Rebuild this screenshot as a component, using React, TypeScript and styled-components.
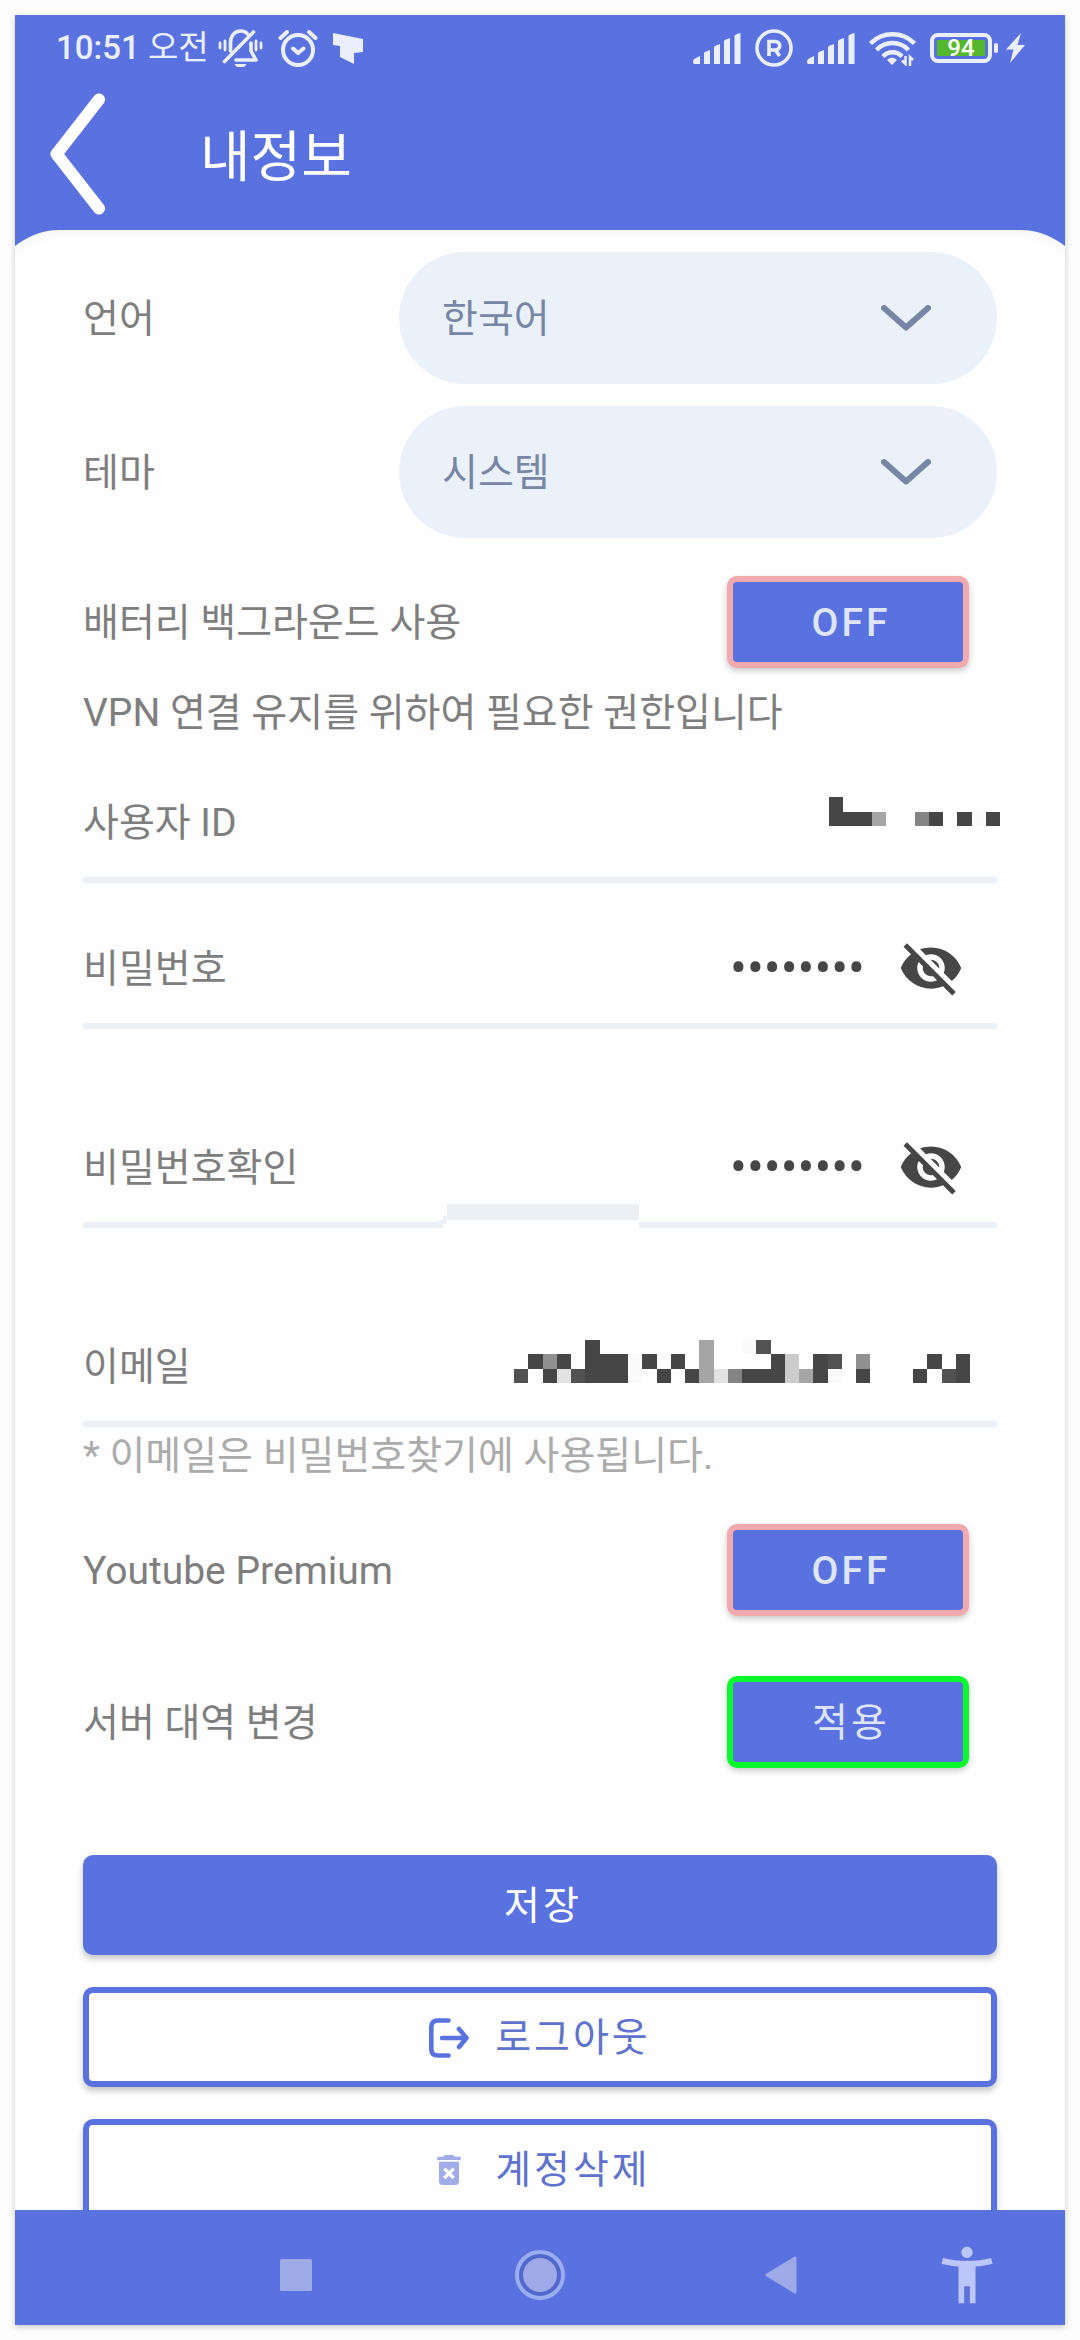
import React from 'react';
import styled, { createGlobalStyle } from 'styled-components';
import { MdVisibilityOff, MdDeleteForever, MdAccessibilityNew } from 'react-icons/md';

const blue = '#5a72e0';
const fontStack = `Roboto, 'Noto Sans CJK KR', sans-serif`;

const GlobalStyle = createGlobalStyle`
  *, *::before, *::after { box-sizing: border-box; }
  body { margin: 0; background: #fdfdfd; font-family: ${fontStack}; }
  button, input, select { font-family: inherit; }
`;

const Page = styled.div`
  height: 100vh;
  padding: 15px;
`;

const Phone = styled.div`
  display: flex;
  flex-direction: column;
  height: 100%;
  overflow: hidden;
  background: ${blue};
  box-shadow: 0 2px 6px rgba(0, 0, 0, 0.22);
`;

const StatusBar = styled.div`
  display: flex;
  flex: none;
  align-items: center;
  justify-content: space-between;
  height: 66px;
  padding: 0 40px 0 41px;
  color: #ebeffd;
`;

const StatusGroup = styled.div<{ $gap: number }>`
  display: flex;
  align-items: center;
  gap: ${(p) => p.$gap}px;
`;

const Clock = styled.span`
  margin-right: -6px;
  font-size: 33px;
  line-height: 40px;
  b { font-weight: 500; }
`;

const BatteryBody = styled.span`
  display: flex;
  width: 62px;
  height: 30px;
  padding: 3px;
  border: 4px solid #ebeffd;
  border-radius: 8px;
`;

const BatteryLevel = styled.span`
  display: flex;
  flex: 1;
  align-items: center;
  justify-content: center;
  background: #55b82c;
  color: #fff;
  font-size: 24px;
  font-weight: 500;
  line-height: 16px;
`;

const Battery = styled.span`
  display: flex;
  align-items: center;
  gap: 2px;
  &::after {
    content: '';
    width: 4px;
    height: 10px;
    border-radius: 2px;
    background: #ebeffd;
  }
`;

const AppBar = styled.header`
  position: relative;
  display: flex;
  flex: none;
  align-items: center;
  gap: 94px;
  height: 149px;
  padding: 0 35px 4px;
`;

const BackButton = styled.button`
  display: flex;
  padding: 0;
  border: 0;
  background: none;
  color: #fff;
  cursor: pointer;
`;

const Title = styled.h1`
  margin: 0;
  padding-top: 6px;
  color: #fff;
  font-size: 55px;
  font-weight: 400;
  line-height: 64px;
`;

const Sheet = styled.main`
  flex: 1;
  min-height: 0;
  margin: 0 -26px;
  padding: 22px 94px 0;
  overflow-y: auto;
  scrollbar-width: none;
  border-radius: 71px 71px 0 0;
  background: #fefefe;
  box-shadow: inset 0 4px 8px rgba(80, 60, 60, 0.05);
`;

const Row = styled.div<{ $top?: number }>`
  display: flex;
  align-items: center;
  justify-content: space-between;
  margin-top: ${(p) => p.$top ?? 0}px;
  padding-right: 28px;
`;

const SelectRow = styled.div`
  display: grid;
  grid-template-columns: 316px 1fr;
  align-items: center;
  margin-bottom: 22px;
`;

const Label = styled.label`
  flex: none;
  padding-top: 2px;
  color: #7e7e7e;
  font-size: 39px;
  line-height: 50px;
`;

const Hint = styled.p<{ $top: number; $light?: boolean }>`
  margin: ${(p) => p.$top}px 0 -1px;
  color: ${(p) => (p.$light ? '#ababab' : '#7e7e7e')};
  font-size: 39px;
  line-height: 50px;
`;

const SelectWrap = styled.div`
  position: relative;
  svg {
    position: absolute;
    top: 53px;
    right: 66px;
    pointer-events: none;
  }
`;

const Select = styled.select`
  width: 100%;
  height: 132px;
  padding: 2px 120px 0 43px;
  appearance: none;
  border: 0;
  border-radius: 66px;
  background: #eaf1f9;
  color: #7886a6;
  font-size: 39px;
`;

const ToggleButton = styled.button<{ $ring: string }>`
  width: 242px;
  height: 92px;
  padding: 2px 0 0 6px;
  border: 6px solid ${(p) => p.$ring};
  border-radius: 10px;
  background: ${blue};
  box-shadow: 0 3px 6px rgba(0, 0, 0, 0.2);
  color: #dfe5f8;
  font-size: 39px;
  letter-spacing: 3px;
  line-height: 50px;
  cursor: pointer;
  b { font-weight: 500; }
`;

const Field = styled.div<{ $top?: number }>`
  position: relative;
  display: flex;
  align-items: center;
  height: 146px;
  margin-top: ${(p) => p.$top ?? 0}px;
  padding-top: 30px;
  border-bottom: 6px solid #ecf1f7;
`;

const FieldInput = styled.input`
  flex: 1;
  min-width: 0;
  height: 60px;
  padding: 0;
  border: 0;
  outline: 0;
  background: none;
  color: #464646;
  font-size: 50px;
  text-align: right;
`;

const EyeButton = styled.button`
  display: flex;
  margin: 0 33px 0 33px;
  padding: 0;
  border: 0;
  background: none;
  color: #464646;
  cursor: pointer;
`;

const Censor = styled.svg<{ $right: number; $top: number }>`
  position: absolute;
  top: ${(p) => p.$top}px;
  right: ${(p) => p.$right}px;
`;

const Smudge = styled.svg`
  position: absolute;
  bottom: -6px;
  left: 39%;
`;

const Actions = styled.div`
  display: flex;
  flex-direction: column;
  gap: 32px;
  margin-top: 87px;
  padding-bottom: 32px;
`;

const ActionButton = styled.button<{ $filled?: boolean }>`
  display: flex;
  align-items: center;
  justify-content: center;
  gap: 26px;
  height: 100px;
  padding: ${(p) => (p.$filled ? '2px 0 0 6px' : '2px 0 0')};
  border: 6px solid ${blue};
  border-radius: 10px;
  background: ${(p) => (p.$filled ? blue : '#fefefe')};
  box-shadow: 0 4px 6px rgba(0, 0, 0, 0.22);
  color: ${(p) => (p.$filled ? '#fff' : '#5f72cc')};
  font-size: 39px;
  letter-spacing: 3px;
  line-height: 50px;
  cursor: pointer;
`;

const IconSlot = styled.span`
  display: flex;
  justify-content: center;
  width: 40px;
  color: #a0abe8;
`;

const NavBar = styled.nav`
  position: relative;
  display: grid;
  flex: none;
  grid-template-columns: 122fr 122fr 119fr 67fr;
  height: 115px;
  padding: 15px 31px 0 159px;
  background: ${blue};
`;

const NavButton = styled.button`
  display: flex;
  align-items: center;
  justify-content: center;
  padding: 0;
  border: 0;
  background: none;
  color: #bcc6fa;
  cursor: pointer;
`;

const BellOff = () => (
  <svg width="45" height="38" viewBox="0 0 45 38" fill="none" stroke="currentColor" strokeWidth="3.6" strokeLinecap="round" strokeLinejoin="round">
    <path d="M12.5 22V14c0-7 4-12 10-12 3 0 5.500 1 7 3M33 14v8l5 9H18" />
    <path d="M6.500 32.500 35.500 3" />
    <path d="M2 14v5M7 12v9M38 12v9M43 14v5" strokeWidth="2.800" />
    <path d="M16.500 35h12c-1.500 3-3.500 3.500-6 3.500s-4.500-.5-6-3.500z" fill="currentColor" stroke="none" />
  </svg>
);

const Alarm = () => (
  <svg width="40" height="38" viewBox="0 0 40 38" fill="none" stroke="currentColor" strokeWidth="4" strokeLinecap="round" strokeLinejoin="round">
    <circle cx="20" cy="21" r="15" />
    <path d="M2.500 9 9 3M37.500 9 31 3M15 19.500l5 4.500 5.500-4.500" />
  </svg>
);

const FlagMark = () => (
  <svg width="30" height="31" viewBox="0 0 30 31" fill="currentColor">
    <path d="M0 0 30 6V19L21 20V31L7 24V13L0 12Z" />
  </svg>
);

const Signal = () => (
  <svg width="48" height="31" viewBox="0 0 48 31" fill="currentColor">
    <path d="M0 28q0-2 7-5v8H1.500Q0 31 0 28zM11 20q0-1 6-3v14h-6zM21 14q0-1 6-3v20h-6zM31 8q0-1 6-3v26h-6zM41.500 3q0-1.500 6-3v31h-6z" />
  </svg>
);

const Registered = () => (
  <svg width="38" height="38" viewBox="0 0 38 38" fill="none" stroke="currentColor" strokeWidth="3.600">
    <circle cx="19" cy="19" r="17" />
    <path d="M14 27V12.500h6.500a4 4 0 0 1 0 8.500H14M20.500 21l4 6" />
  </svg>
);

const Wifi = () => (
  <svg width="47" height="35" viewBox="0 0 47 35" fill="none" stroke="currentColor" strokeWidth="4.500">
    <path d="M1.500 12.500a31 31 0 0 1 44 0M7.500 19a22 22 0 0 1 32 0M14 25.500a13 13 0 0 1 19 0" />
    <path d="M18 29q5-5 10 0l-5 5z" fill="currentColor" stroke="none" />
    <path d="M33 29.500l3.500 3.500v-8M44 29l-3-3v9" strokeWidth="2.500" />
  </svg>
);

const Bolt = () => (
  <svg width="19" height="30" viewBox="0 0 19 30" fill="currentColor">
    <path d="M15 0 0 16.500h7.500L4 30 19 12h-7.500z" />
  </svg>
);

const ChevronDown = () => (
  <svg width="50" height="26" viewBox="0 0 50 26" fill="none" stroke="#7886a6" strokeWidth="6" strokeLinecap="round" strokeLinejoin="round">
    <path d="M3 3l22 19.500L47 3" />
  </svg>
);

const LogoutIcon = () => (
  <svg width="40" height="40" viewBox="0 0 40 40" fill="none" stroke={blue} strokeWidth="4.600" strokeLinecap="round" strokeLinejoin="round">
    <path d="M19.500 2.500H9Q2.300 2.500 2.300 9v22q0 6.500 6.700 6.500h10.500M13 20h24M30 11l7.500 9-7.500 9" />
  </svg>
);

const tones: Record<string, string> = {
  a: '#464646',
  b: '#525252',
  c: '#858585',
  d: '#909090',
  e: '#a5a5a5',
  f: '#cccccc',
  g: '#e2e2e2',
  h: '#fafafa',
};

const idRows = ['a...........', 'aaae..ca.aha'];
const mailRows = [
  '.....a.......e..hb..............',
  '.ada.aaaha.a.e....af.ab.d....a.a',
  'b.agbaaah.a.aegcaaafeah.a...a.ba',
];

type MosaicProps = { rows: string[]; width: number; height: number; right: number; top: number; name: string };

const Mosaic = ({ rows, width, height, right, top, name }: MosaicProps) => (
  <Censor
    $right={right}
    $top={top}
    width={width}
    height={height}
    viewBox={`0 0 ${rows[0].length} ${rows.length}`}
    preserveAspectRatio="none"
    shapeRendering="crispEdges"
    role="img"
    aria-label={name}
  >
    {rows.flatMap((row, y) =>
      row.split('').map((cell, x) =>
        cell === '.' ? null : <rect key={`${x}-${y}`} x={x} y={y} width="1" height="1" fill={tones[cell]} />
      )
    )}
  </Censor>
);

type PasswordProps = { id: string; label: string; top?: number; children?: React.ReactNode };

const PasswordField = ({ id, label, top, children }: PasswordProps) => (
  <Field $top={top}>
    <Label htmlFor={id}>{label}</Label>
    <FieldInput id={id} type="password" defaultValue="password" />
    <EyeButton type="button" aria-label="비밀번호 표시">
      <MdVisibilityOff size={66} />
    </EyeButton>
    {children}
  </Field>
);

type SelectFieldProps = { id: string; label: string; value: string };

const SelectField = ({ id, label, value }: SelectFieldProps) => (
  <SelectRow>
    <Label htmlFor={id}>{label}</Label>
    <SelectWrap>
      <Select id={id} defaultValue={value}>
        <option>{value}</option>
      </Select>
      <ChevronDown />
    </SelectWrap>
  </SelectRow>
);

export default function App() {
  return (
    <Page>
      <GlobalStyle />
      <Phone>
        <StatusBar>
          <StatusGroup $gap={15}>
            <Clock><b>10:51</b> 오전</Clock>
            <BellOff />
            <Alarm />
            <FlagMark />
          </StatusGroup>
          <StatusGroup $gap={14}>
            <Signal />
            <Registered />
            <Signal />
            <Wifi />
            <StatusGroup $gap={8}>
              <Battery>
                <BatteryBody><BatteryLevel>94</BatteryLevel></BatteryBody>
              </Battery>
              <Bolt />
            </StatusGroup>
          </StatusGroup>
        </StatusBar>

        <AppBar>
          <BackButton type="button" aria-label="뒤로">
            <svg width="56" height="122" viewBox="0 0 56 122" fill="none" stroke="currentColor" strokeWidth="12" strokeLinecap="round" strokeLinejoin="round">
              <path d="M49 6.500 6.500 61 49 115.500" />
            </svg>
          </BackButton>
          <Title>내정보</Title>
        </AppBar>

        <Sheet>
          <SelectField id="language" label="언어" value="한국어" />
          <SelectField id="theme" label="테마" value="시스템" />

          <Row $top={38}>
            <Label htmlFor="battery">배터리 백그라운드 사용</Label>
            <ToggleButton id="battery" type="button" $ring="#f2a9ae"><b>OFF</b></ToggleButton>
          </Row>
          <Hint $top={20}>VPN 연결 유지를 위하여 필요한 권한입니다</Hint>

          <Field>
            <Label htmlFor="user">사용자 ID</Label>
            <FieldInput id="user" type="text" readOnly />
            <Mosaic rows={idRows} width={171} height={29} right={-3} top={60} name="사용자 ID 가림" />
          </Field>

          <PasswordField id="password" label="비밀번호" />
          <PasswordField id="confirm" label="비밀번호확인" top={53}>
            <Smudge width="200" height="24" viewBox="0 0 200 24" shapeRendering="crispEdges">
              <path d="M0 16h200v8H0z" fill="#fefefe" />
              <path d="M8 0h192v16H8v4H4v4H0v-8h4v-4h4z" fill="#ebf0f5" />
            </Smudge>
          </PasswordField>

          <Field $top={53}>
            <Label htmlFor="email">이메일</Label>
            <FieldInput id="email" type="email" readOnly />
            <Mosaic rows={mailRows} width={456} height={43} right={27} top={59} name="이메일 가림" />
          </Field>
          <Hint $top={4} $light>* 이메일은 비밀번호찾기에 사용됩니다.</Hint>

          <Row $top={44}>
            <Label htmlFor="premium">Youtube Premium</Label>
            <ToggleButton id="premium" type="button" $ring="#f2a9ae"><b>OFF</b></ToggleButton>
          </Row>
          <Row $top={60}>
            <Label htmlFor="server">서버 대역 변경</Label>
            <ToggleButton id="server" type="button" $ring="#0af92e">적용</ToggleButton>
          </Row>

          <Actions>
            <ActionButton type="button" $filled>저장</ActionButton>
            <ActionButton type="button">
              <IconSlot><LogoutIcon /></IconSlot>
              로그아웃
            </ActionButton>
            <ActionButton type="button">
              <IconSlot><MdDeleteForever size={40} /></IconSlot>
              계정삭제
            </ActionButton>
          </Actions>
        </Sheet>

        <NavBar>
          <NavButton type="button" aria-label="최근 앱">
            <svg width="32" height="32" viewBox="0 0 32 32"><rect width="32" height="32" rx="1.500" fill="#9eaae8" /></svg>
          </NavButton>
          <NavButton type="button" aria-label="홈">
            <svg width="50" height="50" viewBox="0 0 50 50">
              <circle cx="25" cy="25" r="23" fill="#5068cc" stroke="#9aadf0" strokeWidth="4" />
              <circle cx="25" cy="25" r="17" fill="#9eaae8" />
            </svg>
          </NavButton>
          <NavButton type="button" aria-label="뒤로 가기">
            <svg width="32" height="38" viewBox="0 0 32 38">
              <path d="M2 19 30 2v34z" fill="#9eaae8" stroke="#9eaae8" strokeWidth="3" strokeLinejoin="round" />
            </svg>
          </NavButton>
          <NavButton type="button" aria-label="접근성">
            <MdAccessibilityNew size={68} />
          </NavButton>
        </NavBar>
      </Phone>
    </Page>
  );
}
